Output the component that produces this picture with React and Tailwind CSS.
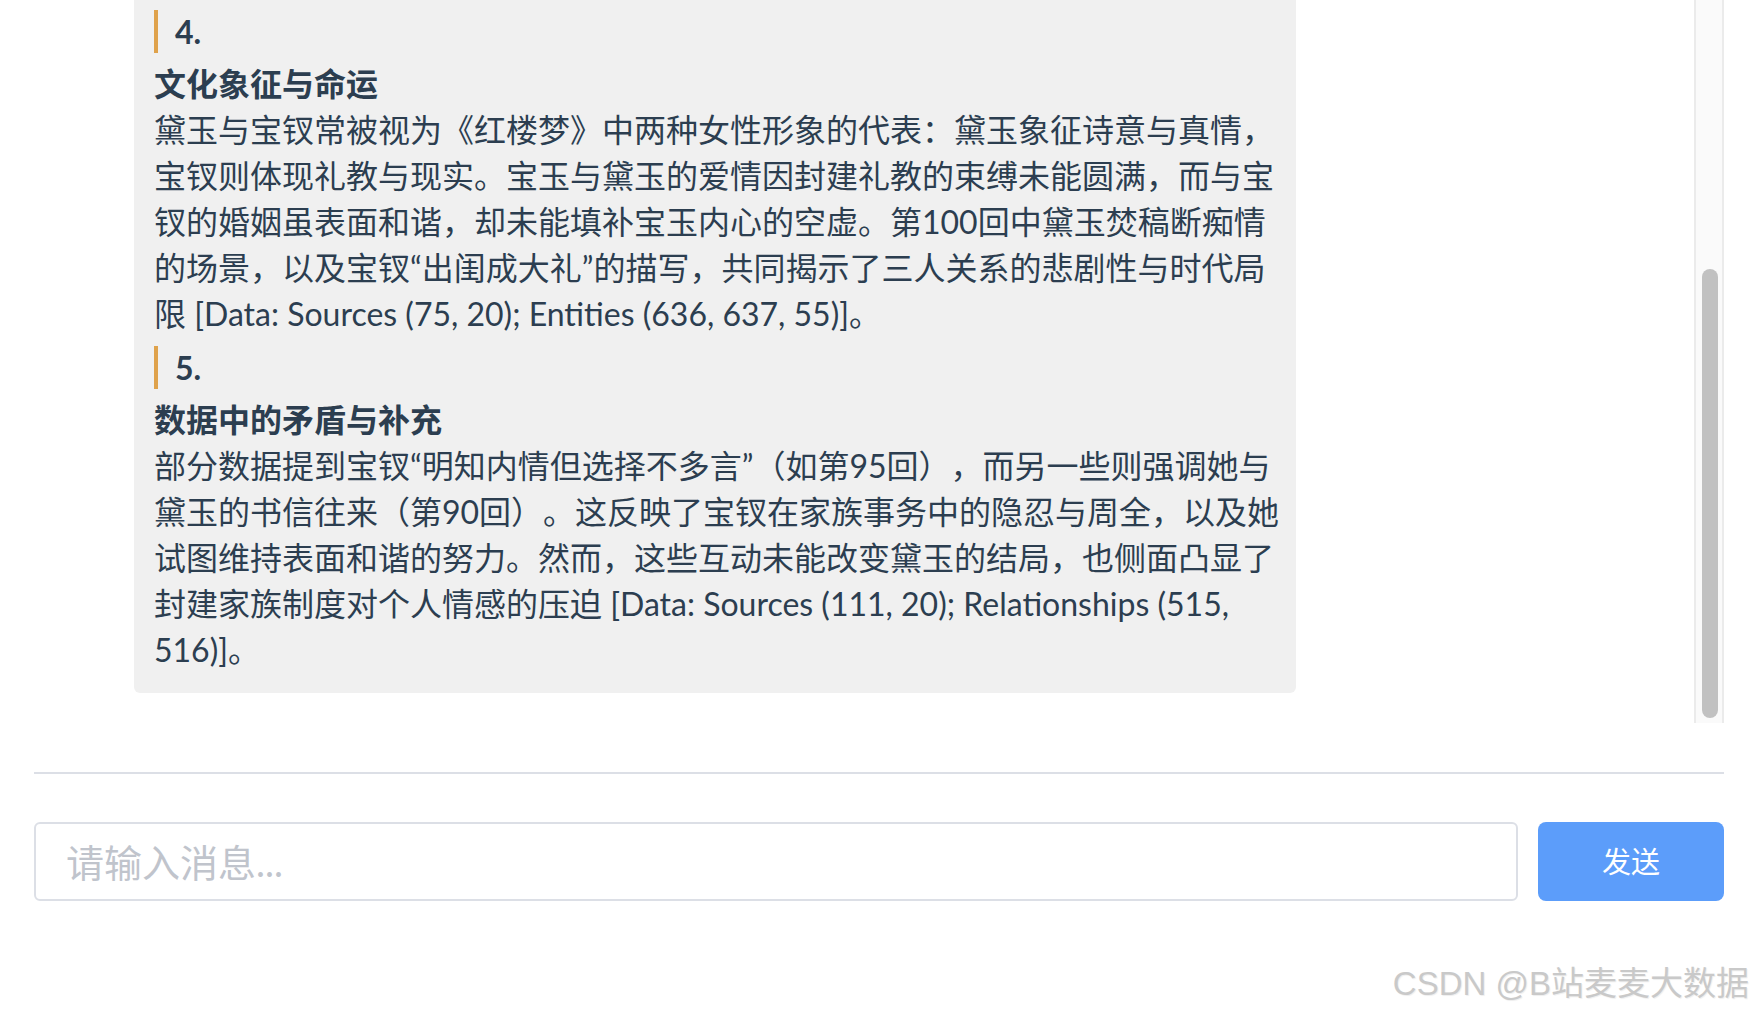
import { useLayoutEffect, useRef, useState } from 'react'

// 助手回复的分点内容
const sections = [
  {
    no: '3.',
    title: '金玉良缘与家族安排',
    body: '宝钗与宝玉的婚姻源于“金玉良缘”之说，得到王夫人与薛姨妈的积极推动。贾母最终认可这门亲事，认为宝钗“品格端方、容貌丰美”，更适合承担家族责任。第97回“掉包计”中，宝玉在神志不清时与宝钗成婚，而黛玉则在同一时刻含恨而逝。这一安排集中体现了家族利益对个人情感的压制，也使三人的命运彻底交织在一起，成为全书最具悲剧色彩的情节之一 [Data: Sources (97, 98); Entities (636, 55)]。',
  },
  {
    no: '4.',
    title: '文化象征与命运',
    body: '黛玉与宝钗常被视为《红楼梦》中两种女性形象的代表：黛玉象征诗意与真情，宝钗则体现礼教与现实。宝玉与黛玉的爱情因封建礼教的束缚未能圆满，而与宝钗的婚姻虽表面和谐，却未能填补宝玉内心的空虚。第100回中黛玉焚稿断痴情的场景，以及宝钗“出闺成大礼”的描写，共同揭示了三人关系的悲剧性与时代局限 [Data: Sources (75, 20); Entities (636, 637, 55)]。',
  },
  {
    no: '5.',
    title: '数据中的矛盾与补充',
    body: '部分数据提到宝钗“明知内情但选择不多言”（如第95回），而另一些则强调她与黛玉的书信往来（第90回）。这反映了宝钗在家族事务中的隐忍与周全，以及她试图维持表面和谐的努力。然而，这些互动未能改变黛玉的结局，也侧面凸显了封建家族制度对个人情感的压迫 [Data: Sources (111, 20); Relationships (515, 516)]。',
  },
]

function Section({ item, first }) {
  return (
    <div>
      <div
        className={
          'flex h-[43px] items-center border-l-4 border-[#dfa24b] pl-[17px] font-bold ' +
          (first ? '' : 'mt-[9px]')
        }
      >
        {item.no}
      </div>
      <p className="mt-[8px] font-bold">{item.title}</p>
      <p className="[text-spacing-trim:space-all]">{item.body}</p>
    </div>
  )
}

export default function App() {
  const listRef = useRef(null)
  const [thumb, setThumb] = useState({ top: 0, height: 0 })

  // 消息列表滚动到底部，并计算滚动条位置
  useLayoutEffect(() => {
    const el = listRef.current
    if (!el) return
    el.scrollTop = el.scrollHeight
    const h = el.clientHeight
    const total = el.scrollHeight
    setThumb({
      top: (h * el.scrollTop) / total + 5,
      height: (h * h) / total - 10,
    })
  }, [])

  return (
    <div className="relative h-[1016px] w-full overflow-hidden bg-white font-['Lato','Noto_Sans_CJK_SC',sans-serif] text-[#2c3e50]">
      <div className="flex h-full flex-col pl-[34px] pr-[28px]">
        <div className="flex h-[723px] shrink-0">
          <div ref={listRef} className="min-w-0 flex-1 overflow-hidden">
            <div className="pt-[23px] pb-[30px]">
              <div className="flex items-start gap-[30px]">
                <div className="flex h-[70px] w-[70px] shrink-0 items-center justify-center rounded-full bg-[#67c23a] text-[26px] text-white">
                  AI
                </div>
                <div className="max-w-[70%] rounded-[6px] bg-[#f0f0f0] pt-[20px] pb-[20px] pl-[20px] pr-[14px] text-[32px] leading-[46px]">
                  {sections.map((item, i) => (
                    <Section key={item.no} item={item} first={i === 0} />
                  ))}
                </div>
              </div>
            </div>
          </div>
          <div className="w-[30px] shrink-0 border-x-2 border-[#ebebeb] bg-[#fafafa]">
            <div
              className="ml-[6px] w-[16px] rounded-full bg-[#c1c1c1]"
              style={{ marginTop: thumb.top, height: thumb.height }}
            />
          </div>
        </div>

        <div className="mt-[49px] flex gap-[20px] border-t-2 border-[#dcdfe6] pt-[48px]">
          <input
            type="text"
            placeholder="请输入消息..."
            className="h-[79px] min-w-0 flex-1 rounded-[6px] border-2 border-[#dcdfe6] bg-white px-[30px] text-[38px] text-[#606266] outline-none placeholder:text-[#c0c4cc]"
          />
          <button className="h-[79px] w-[186px] shrink-0 rounded-[8px] bg-[#5c9dfa] text-[29px] text-white">
            发送
          </button>
        </div>
      </div>

      <div className="absolute right-[3px] bottom-[8px] font-['Liberation_Sans','Noto_Sans_CJK_SC',sans-serif] text-[33px] text-[#c9c9c9] [text-shadow:1px_1px_1px_#eeeeee]">
        CSDN @B站麦麦大数据
      </div>
    </div>
  )
}
